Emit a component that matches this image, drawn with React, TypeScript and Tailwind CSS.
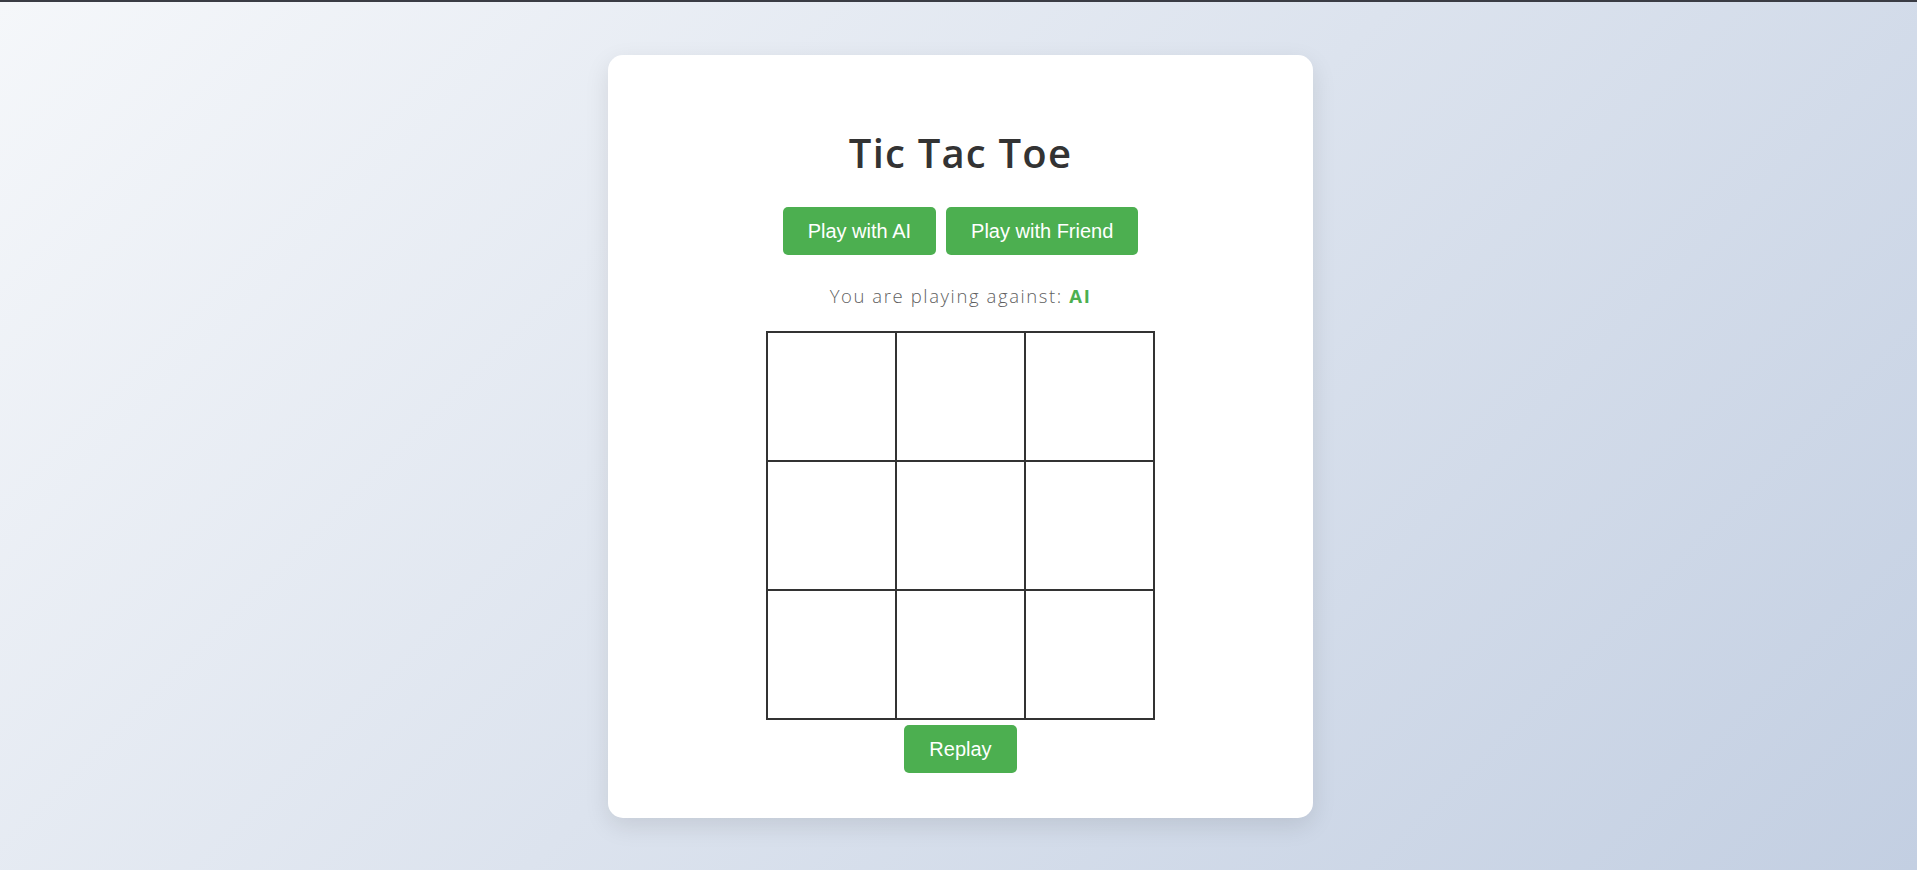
import { useState } from "react"

type Mode = "AI" | "Friend"

export default function App() {
    const [mode, setMode] = useState<Mode>("AI")
    const [board, setBoard] = useState<string[]>(Array(9).fill(""))
    const [turn, setTurn] = useState<"X" | "O">("X")

    const play = (i: number) => {
        if (board[i]) return
        const next = [...board]
        next[i] = turn
        setBoard(next)
        setTurn(turn === "X" ? "O" : "X")
    }

    const reset = () => {
        setBoard(Array(9).fill(""))
        setTurn("X")
    }

    const btn =
        "bg-[#4caf50] text-white text-[20px] leading-[24px] px-[25px] py-[12px] rounded-[5px] cursor-pointer hover:bg-[#45a049] [font-family:'Liberation_Sans',Arial,sans-serif]"

    return (
        <div className="min-h-screen flex flex-col bg-[linear-gradient(135deg,#f5f7fa_0%,#c3cfe2_100%)]">
            <div className="h-[2px] bg-[#3a3c44]" />
            <div className="flex-1 flex items-center justify-center">
                <div className="ml-[4px] w-[705px] h-[763px] bg-white rounded-[15px] shadow-[0_8px_24px_rgba(0,0,0,0.1)] flex flex-col items-center pt-[74px] [font-family:'Open_Sans',sans-serif]">
                    <h1 className="text-[40px] leading-[48px] font-semibold text-[#333] tracking-[1.2px]">Tic Tac Toe</h1>

                    <div className="flex gap-[10px] mt-[30px]">
                        <button className={btn} onClick={() => { setMode("AI"); reset() }}>Play with AI</button>
                        <button className={btn} onClick={() => { setMode("Friend"); reset() }}>Play with Friend</button>
                    </div>

                    <p className="mt-[27px] text-[18.5px] leading-[27px] font-light text-[#5f5f5f] tracking-[1.6px]">
                        You are playing against: <span className="font-bold text-[#4caf50]">{mode}</span>
                    </p>

                    {/* tablero */}
                    <div className="mt-[22px] grid grid-cols-3 gap-[2px] p-[2px] bg-[#333]">
                        {board.map((cell, i) => (
                            <div
                                key={i}
                                onClick={() => play(i)}
                                className="w-[127px] h-[127px] bg-white flex items-center justify-center text-[64px] font-bold text-[#333] cursor-pointer"
                            >
                                {cell}
                            </div>
                        ))}
                    </div>

                    <button className={`${btn} mt-[5px]`} onClick={reset}>Replay</button>
                </div>
            </div>
        </div>
    )
}
